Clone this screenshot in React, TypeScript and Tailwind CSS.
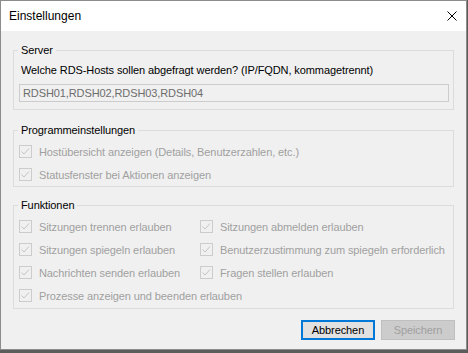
import { FunctionComponent } from "react";

const font = { fontFamily: '"Liberation Sans", Arial, sans-serif' };

type CheckRowProps = {
  label: string;
  className?: string;
};

const CheckRow: FunctionComponent<CheckRowProps> = ({ label, className = "" }) => {
  return (
    <div className={`h-[23px] flex flex-row items-center gap-[7px] ${className}`}>
      <div className="w-[13px] h-[13px] shrink-0 border border-solid border-[#cccccc] bg-[#f0f0f0] flex items-center justify-center">
        <svg width="11" height="11" viewBox="0 0 11 11">
          <path d="M1.5 5.5 L4 8 L9 2.5" fill="none" stroke="#c4c4c4" strokeWidth="1" />
        </svg>
      </div>
      <span className="text-[11px] leading-[14px] tracking-[-0.1px] text-[#a0a0a0] whitespace-nowrap">{label}</span>
    </div>
  );
};

const GroupBox: FunctionComponent<{ title: string; className?: string; children: React.ReactNode }> = ({
  title,
  className = "",
  children,
}) => {
  return (
    <fieldset className={`min-w-0 border border-solid border-[#dcdcdc] px-[5px] ${className}`}>
      <legend className="px-[3px] ml-[-1px] text-[11px] leading-[14px] tracking-[-0.1px] text-black">{title}</legend>
      {children}
    </fieldset>
  );
};

export default function App() {
  return (
    <div className="w-[468px] h-[353px] bg-[#5c5c5c]" style={font}>
      <div className="w-[467px] h-[350px] border border-solid border-[#8c8c8c] bg-[#f0f0f0] flex flex-col">
        <div className="h-[30px] bg-white flex flex-row items-center justify-between pl-[8px] pr-[9px]">
          <span className="text-[12px] leading-[15px] text-black">Einstellungen</span>
          <svg width="10" height="10" viewBox="0 0 10 10">
            <path d="M0.5 0.5 L9.5 9.5 M9.5 0.5 L0.5 9.5" stroke="#000" strokeWidth="1" />
          </svg>
        </div>
        <div className="flex-1 flex flex-col px-[12px]">
          <GroupBox title="Server" className="mt-[12px] pb-[7px]">
            <div className="mt-[6px] pl-[2px] text-[11px] leading-[15px] tracking-[-0.1px] text-black whitespace-nowrap">
              Welche RDS-Hosts sollen abgefragt werden? (IP/FQDN, kommagetrennt)
            </div>
            <div className="mt-[6px] h-[18px] border border-solid border-[#cccccc] bg-[#f0f0f0] flex items-center pl-[3px] mr-[-1px] text-[11px] leading-[15px] tracking-[-0.1px] text-[#6d6d6d]">
              RDSH01,RDSH02,RDSH03,RDSH04
            </div>
          </GroupBox>

          <GroupBox title="Programmeinstellungen" className="mt-[13px]">
            <div className="mt-[3px] flex flex-col">
              <CheckRow label="Hostübersicht anzeigen (Details, Benutzerzahlen, etc.)" />
              <CheckRow label="Statusfenster bei Aktionen anzeigen" />
            </div>
          </GroupBox>

          <GroupBox title="Funktionen" className="mt-[11px] pb-[1px]">
            <div className="mt-[3px] grid grid-cols-[181px_1fr]">
              <CheckRow label="Sitzungen trennen erlauben" />
              <CheckRow label="Sitzungen abmelden erlauben" />
              <CheckRow label="Sitzungen spiegeln erlauben" />
              <CheckRow label="Benutzerzustimmung zum spiegeln erforderlich" />
              <CheckRow label="Nachrichten senden erlauben" />
              <CheckRow label="Fragen stellen erlauben" />
              <CheckRow label="Prozesse anzeigen und beenden erlauben" className="col-span-2" />
            </div>
          </GroupBox>

          <div className="mt-[11px] mr-[-1px] flex flex-row justify-end gap-[6px]">
            <button className="w-[74px] h-[20px] border-2 border-solid border-[#0078d7] bg-[#e1e1e1] text-[11px] leading-[15px] tracking-[-0.1px] text-black">
              Abbrechen
            </button>
            <button
              disabled
              className="w-[74px] h-[20px] border border-solid border-[#bfbfbf] bg-[#cccccc] text-[11px] leading-[15px] tracking-[-0.1px] text-[#a0a0a0]"
            >
              Speichern
            </button>
          </div>
        </div>
      </div>
    </div>
  );
}
